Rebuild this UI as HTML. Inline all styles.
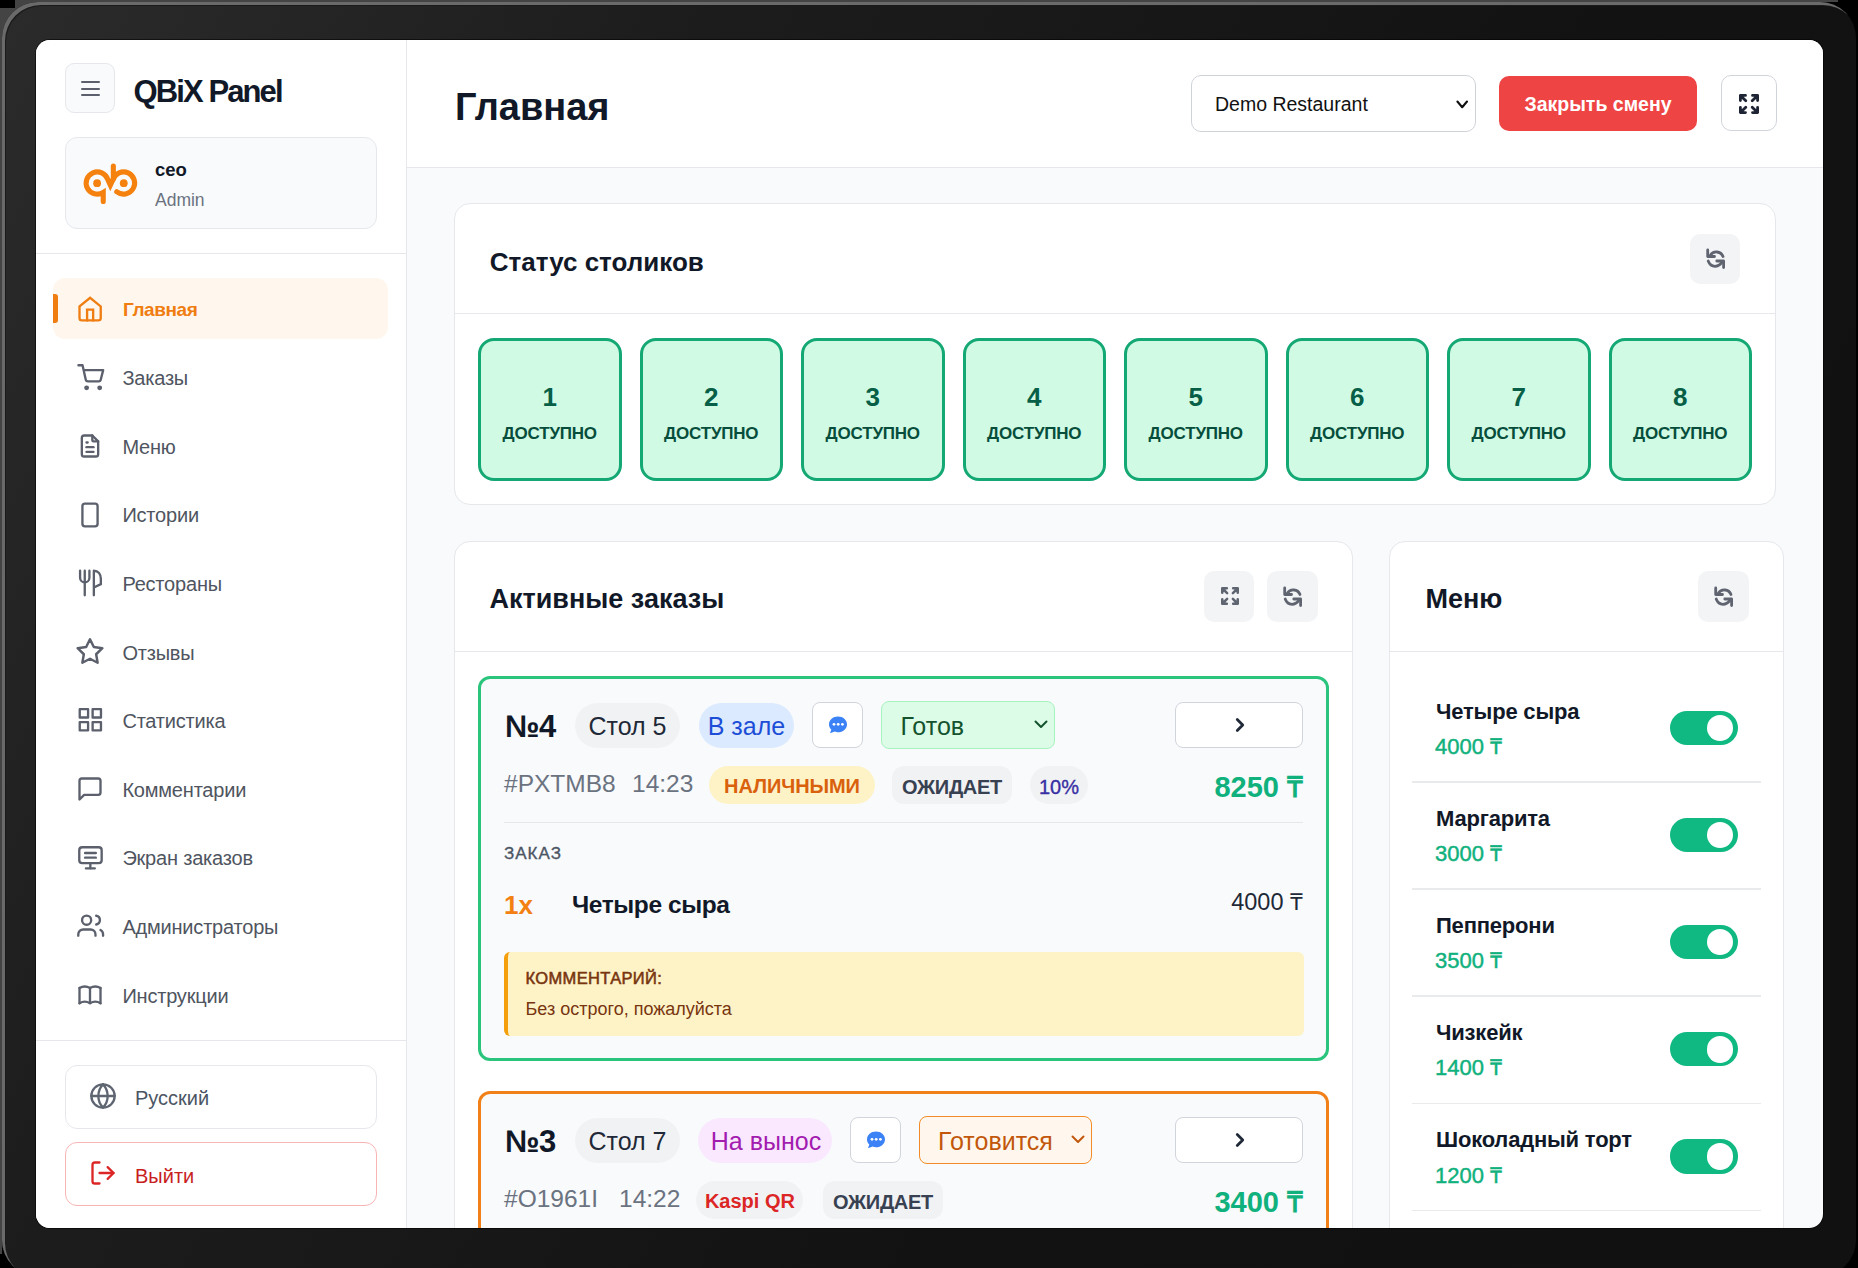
<!DOCTYPE html>
<html><head><meta charset="utf-8">
<style>
html,body{margin:0;padding:0;}
body{width:1858px;height:1268px;position:relative;overflow:hidden;background:#000;font-family:"Liberation Sans",sans-serif;}
.t{position:absolute;white-space:nowrap;}
.b{position:absolute;box-sizing:border-box;}
svg.b{overflow:visible;}
#scr{position:absolute;left:36px;top:40px;width:1787px;height:1188px;border-radius:14px;overflow:hidden;background:#f9fafb;box-shadow:0 0 0 1px rgba(0,0,0,.55);}
</style></head><body>
<div style="position:absolute;left:0;top:0;width:1838px;height:2px;background:#444;"></div>
<div style="position:absolute;left:0;top:0;width:2px;height:1254px;background:#444;"></div>
<div style="position:absolute;left:0;top:0;width:40px;height:40px;background:#444;"></div>
<div style="position:absolute;left:0;top:0;width:15px;height:8px;background:#000;"></div>
<div style="position:absolute;left:2px;top:2px;width:1854px;height:1274px;border-radius:36px;background:linear-gradient(119deg,#2b2b2b 0%,#242424 14%,#1c1c1c 28%,#1a1a1a 37%,#121212 63%,#111 100%);box-shadow:inset 3px 3px 0 #6a6a6a, inset 4px 4px 0 #1a1a1a;"></div>
<div id="scr">
<div class="b" style="left:0.00px;top:0.00px;width:371px;height:1188px;background:#fff;border-right:1px solid #e5e7eb;"></div>
<div class="b" style="left:29.00px;top:23.00px;width:50px;height:50px;background:#f8fafc;border:1px solid #e5e7eb;border-radius:9px;"></div>
<div class="b" style="left:44.50px;top:40.90px;width:19.5px;height:2.3px;background:#5b606c;border-radius:1px;"></div>
<div class="b" style="left:44.50px;top:47.50px;width:19.5px;height:2.3px;background:#5b606c;border-radius:1px;"></div>
<div class="b" style="left:44.50px;top:54.10px;width:19.5px;height:2.3px;background:#5b606c;border-radius:1px;"></div>
<div class="t" style="left:97.50px;top:35.65px;font-size:31px;line-height:31px;font-weight:700;color:#111827;letter-spacing:-1.9px;">QBiX Panel</div>
<div class="b" style="left:29.00px;top:97.00px;width:312px;height:92px;background:#f8fafc;border:1px solid #e5e7eb;border-radius:12px;"></div>
<svg class="b" style="left:42.00px;top:115.00px;width:67px;height:55px" viewBox="0 0 67 55" fill="none" stroke="#f5820f" stroke-width="5.1" stroke-linecap="round" stroke-miterlimit="8"><path d="M25.25 46.5 V37.34 A11.1 11.1 0 1 1 29.8 24.57 L32.35 30.2 L34.99 24.57 A11.1 11.1 0 1 1 38.72 36.75" stroke-linejoin="miter"/><path d="M35.35 11 V24" /><circle cx="19.1" cy="28.2" r="3.9" fill="#f5820f" stroke="none"/><circle cx="45.75" cy="28.2" r="3.9" fill="#f5820f" stroke="none"/></svg>
<div class="t" style="left:119.00px;top:121.28px;font-size:18.5px;line-height:18.5px;font-weight:700;color:#111827;">ceo</div>
<div class="t" style="left:119.00px;top:152.12px;font-size:17.5px;line-height:17.5px;font-weight:400;color:#6b7280;">Admin</div>
<div class="b" style="left:0.00px;top:213.00px;width:370px;height:1px;background:#e5e7eb;"></div>
<div class="b" style="left:17.00px;top:238.00px;width:335px;height:61px;background:#fff7ed;border-radius:12px;"></div>
<div class="b" style="left:17.00px;top:254.00px;width:4.5px;height:29px;background:#f07d12;border-radius:0 3px 3px 0;"></div>
<svg class="b" style="left:40.00px;top:254.70px;width:28px;height:28px;color:#f07d12;" viewBox="0 0 24 24" fill="none" stroke="#f07d12" stroke-width="2" stroke-linecap="round" stroke-linejoin="round"><path d="M3.0 9.8 L12.1 2.4 L21.2 9.8 V19.8 a2 2 0 0 1 -2 2 H5.0 a2 2 0 0 1 -2 -2 Z" stroke-linejoin="miter"/><path d="M9.5 21.8 V12.5 H14.7 V21.8" stroke-linejoin="miter"/></svg>
<div class="t" style="left:87.00px;top:260.35px;font-size:19px;line-height:19px;font-weight:700;color:#f07d12;letter-spacing:-0.4px;">Главная</div>
<svg class="b" style="left:40.00px;top:323.30px;width:28px;height:28px;color:#5b606c;" viewBox="0 0 24 24" fill="none" stroke="#5b606c" stroke-width="2" stroke-linecap="round" stroke-linejoin="round"><circle cx="9.1" cy="21.3" r="1.1" fill="currentColor"/><circle cx="20.3" cy="21.3" r="1.1" fill="currentColor"/><path d="M2.1 1.9 H5.6 L8.3 14 a2 2 0 0 0 2 1.7 H19.3 a2 2 0 0 0 2 -1.7 L23.3 6.1 H6.6"/></svg>
<div class="t" style="left:86.40px;top:328.10px;font-size:20px;line-height:20px;font-weight:400;color:#4f5560;letter-spacing:-0.2px;">Заказы</div>
<svg class="b" style="left:40.00px;top:391.90px;width:28px;height:28px;color:#5b606c;" viewBox="0 0 24 24" fill="none" stroke="#5b606c" stroke-width="2" stroke-linecap="round" stroke-linejoin="round"><path d="M14 3v4a1 1 0 0 0 1 1h4"/><path d="M17 21h-10a2 2 0 0 1 -2 -2v-14a2 2 0 0 1 2 -2h7l5 5v11a2 2 0 0 1 -2 2z"/><path d="M9 9l1 0"/><path d="M9 13l6 0"/><path d="M9 17l6 0"/></svg>
<div class="t" style="left:86.40px;top:396.70px;font-size:20px;line-height:20px;font-weight:400;color:#4f5560;letter-spacing:-0.2px;">Меню</div>
<svg class="b" style="left:40.00px;top:460.50px;width:28px;height:28px;color:#5b606c;" viewBox="0 0 24 24" fill="none" stroke="#5b606c" stroke-width="2" stroke-linecap="round" stroke-linejoin="round"><rect x="5.5" y="2.3" width="13" height="19.4" rx="2.2"/></svg>
<div class="t" style="left:86.40px;top:465.30px;font-size:20px;line-height:20px;font-weight:400;color:#4f5560;letter-spacing:-0.2px;">Истории</div>
<svg class="b" style="left:40.00px;top:529.10px;width:28px;height:28px;color:#5b606c;" viewBox="0 0 24 24" fill="none" stroke="#5b606c" stroke-width="2" stroke-linecap="round" stroke-linejoin="round"><path d="M3.5 1.5 V7.5 a4 4 0 0 0 8 0 V1.5"/><path d="M7.5 1.5 V22.5"/><path d="M15.3 22.5 V1.5 C19 1.5 21.3 4.5 21.3 8.5 V13 L15.3 15.8"/></svg>
<div class="t" style="left:86.40px;top:533.90px;font-size:20px;line-height:20px;font-weight:400;color:#4f5560;letter-spacing:-0.2px;">Рестораны</div>
<svg class="b" style="left:40.00px;top:597.70px;width:28px;height:28px;color:#5b606c;" viewBox="0 0 24 24" fill="none" stroke="#5b606c" stroke-width="2" stroke-linecap="round" stroke-linejoin="round"><path transform="translate(12 12) scale(1.06) translate(-12 -12.3)" d="M12 17.75l-6.172 3.245l1.179 -6.873l-5 -4.867l6.9 -1l3.086 -6.253l3.086 6.253l6.9 1l-5 4.867l1.179 6.873z"/></svg>
<div class="t" style="left:86.40px;top:602.50px;font-size:20px;line-height:20px;font-weight:400;color:#4f5560;letter-spacing:-0.2px;">Отзывы</div>
<svg class="b" style="left:40.00px;top:666.30px;width:28px;height:28px;color:#5b606c;" viewBox="0 0 24 24" fill="none" stroke="#5b606c" stroke-width="2" stroke-linecap="round" stroke-linejoin="round"><path d="M3.2 2.7h7.15v7.15h-7.15z"/><path d="M14.25 2.7h7.15v7.15h-7.15z"/><path d="M3.2 13.75h7.15v7.15h-7.15z"/><path d="M14.25 13.75h7.15v7.15h-7.15z"/></svg>
<div class="t" style="left:86.40px;top:671.10px;font-size:20px;line-height:20px;font-weight:400;color:#4f5560;letter-spacing:-0.2px;">Статистика</div>
<svg class="b" style="left:40.00px;top:734.90px;width:28px;height:28px;color:#5b606c;" viewBox="0 0 24 24" fill="none" stroke="#5b606c" stroke-width="2" stroke-linecap="round" stroke-linejoin="round"><path d="M21 15a2 2 0 0 1-2 2H7l-4 4V5a2 2 0 0 1 2-2h14a2 2 0 0 1 2 2z"/></svg>
<div class="t" style="left:86.40px;top:739.70px;font-size:20px;line-height:20px;font-weight:400;color:#4f5560;letter-spacing:-0.2px;">Комментарии</div>
<svg class="b" style="left:40.00px;top:803.50px;width:28px;height:28px;color:#5b606c;" viewBox="0 0 24 24" fill="none" stroke="#5b606c" stroke-width="2" stroke-linecap="round" stroke-linejoin="round"><rect x="2.8" y="2.8" width="19.2" height="13.6" rx="2.5"/><path d="M12.3 16.4v4.4"/><path d="M8.5 20.9h7.6"/><path d="M7.8 7.7h9.2"/><path d="M7.8 11.7h9.2"/></svg>
<div class="t" style="left:86.40px;top:808.30px;font-size:20px;line-height:20px;font-weight:400;color:#4f5560;letter-spacing:-0.2px;">Экран заказов</div>
<svg class="b" style="left:40.00px;top:872.10px;width:28px;height:28px;color:#5b606c;" viewBox="0 0 24 24" fill="none" stroke="#5b606c" stroke-width="2" stroke-linecap="round" stroke-linejoin="round"><circle cx="9.1" cy="7.0" r="3.9"/><path d="M1.94 20.3 V19.2 a4.2 4.2 0 0 1 4.2 -4.2 H12.5 a4.2 4.2 0 0 1 4.2 4.2 V20.3"/><path d="M17.3 3.2 a3.8 3.8 0 0 1 0 7.5"/><path d="M21 15.4 a4.2 4.2 0 0 1 2.2 3.7 V20.3"/></svg>
<div class="t" style="left:86.40px;top:876.90px;font-size:20px;line-height:20px;font-weight:400;color:#4f5560;letter-spacing:-0.2px;">Администраторы</div>
<svg class="b" style="left:40.00px;top:940.70px;width:28px;height:28px;color:#5b606c;" viewBox="0 0 24 24" fill="none" stroke="#5b606c" stroke-width="2" stroke-linecap="round" stroke-linejoin="round"><path d="M3 19a9 9 0 0 1 9 0a9 9 0 0 1 9 0"/><path d="M3 6a9 9 0 0 1 9 0a9 9 0 0 1 9 0"/><path d="M3 6l0 13"/><path d="M12 6l0 13"/><path d="M21 6l0 13"/></svg>
<div class="t" style="left:86.40px;top:945.50px;font-size:20px;line-height:20px;font-weight:400;color:#4f5560;letter-spacing:-0.2px;">Инструкции</div>
<div class="b" style="left:0.00px;top:1000.00px;width:370px;height:1px;background:#e5e7eb;"></div>
<div class="b" style="left:29.00px;top:1025.00px;width:312px;height:64px;background:#fff;border:1px solid #e5e7eb;border-radius:12px;"></div>
<svg class="b" style="left:53.00px;top:1042.00px;width:28px;height:28px;" viewBox="0 0 24 24" fill="none" stroke="#5f6672" stroke-width="2" stroke-linecap="round" stroke-linejoin="round"><circle cx="12" cy="12" r="10"/><path d="M12 2a14.5 14.5 0 0 0 0 20 14.5 14.5 0 0 0 0-20"/><path d="M2 12h20"/></svg>
<div class="t" style="left:99.00px;top:1048.40px;font-size:20px;line-height:20px;font-weight:400;color:#4b5563;">Русский</div>
<div class="b" style="left:29.00px;top:1102.00px;width:312px;height:64px;background:#fff;border:1px solid #f8b4b4;border-radius:12px;"></div>
<svg class="b" style="left:53.00px;top:1119.00px;width:28px;height:28px;" viewBox="0 0 24 24" fill="none" stroke="#dc2626" stroke-width="2" stroke-linecap="round" stroke-linejoin="round"><path d="M9 21H5a2 2 0 0 1-2-2V5a2 2 0 0 1 2-2h4"/><polyline points="16 17 21 12 16 7"/><line x1="21" y1="12" x2="9" y2="12"/></svg>
<div class="t" style="left:99.00px;top:1125.50px;font-size:20px;line-height:20px;font-weight:400;color:#c81e1e;">Выйти</div>
<div class="b" style="left:371.00px;top:0.00px;width:1416px;height:128px;background:#fff;border-bottom:1px solid #e5e7eb;"></div>
<div class="t" style="left:419.00px;top:47.70px;font-size:38px;line-height:38px;font-weight:700;color:#111827;">Главная</div>
<div class="b" style="left:1155.00px;top:35.00px;width:285px;height:57px;background:#fff;border:1.5px solid #cfd3d8;border-radius:10px;"></div>
<div class="t" style="left:1179.00px;top:54.72px;font-size:19.5px;line-height:19.5px;font-weight:400;color:#111111;">Demo Restaurant</div>
<svg class="b" style="left:1416.00px;top:56.00px;width:16px;height:16px;" viewBox="0 0 16 16" fill="none" stroke="#111" stroke-width="2.1" stroke-linecap="round" stroke-linejoin="round"><path d="M5.4 5.5L10.2 11.2L15 5.5"/></svg>
<div class="b" style="left:1463.00px;top:36.00px;width:198px;height:55px;background:#ef4444;border-radius:10px;"></div>
<div class="t" style="left:1463.00px;width:198px;text-align:center;top:54.72px;font-size:19.5px;line-height:19.5px;font-weight:700;color:#ffffff;">Закрыть смену</div>
<div class="b" style="left:1685.00px;top:35.00px;width:56px;height:56px;background:#fff;border:1.5px solid #d1d5db;border-radius:10px;"></div>
<svg class="b" style="left:1702.80px;top:54.00px;width:20px;height:20px;" viewBox="0 0 20 20" fill="none" stroke="#1e2433" stroke-width="2.8" stroke-linecap="round" stroke-linejoin="round"><path d="M6.5 1.4H1.4V6.5M1.4 1.4L6.8 6.8M13.5 1.4H18.6V6.5M18.6 1.4L13.2 6.8M1.4 13.5V18.6H6.5M1.4 18.6L6.8 13.2M18.6 13.5V18.6H13.5M18.6 18.6L13.2 13.2"/></svg>
<div class="b" style="left:418.00px;top:163.00px;width:1322px;height:302px;background:#fff;border:1px solid #e5e7eb;border-radius:16px;"></div>
<div class="b" style="left:419.00px;top:273.00px;width:1320px;height:1px;background:#e5e7eb;"></div>
<div class="t" style="left:453.80px;top:209.10px;font-size:26px;line-height:26px;font-weight:700;color:#111827;">Статус столиков</div>
<div class="b" style="left:1654.00px;top:194.00px;width:50px;height:50px;background:#f3f4f6;border-radius:10px;"></div>
<svg class="b" style="left:1662.00px;top:200.00px;width:36px;height:36px" viewBox="0 0 36 36" fill="none" stroke="#5f6470" stroke-width="2.8" stroke-linecap="round" stroke-linejoin="round"><path d="M9.7 9.9 V16.5 H16.5"/><path d="M25 16.5 A7.2 7.2 0 0 0 12.3 15.2"/><path d="M10.2 21 C11.5 24.4 14 26.3 17 26.3 C19.6 26.3 22 25 23.9 22.4"/><path d="M18.8 21 H25.6 V27.6"/></svg>
<div class="b" style="left:442.00px;top:298.00px;width:143.5px;height:143px;background:#d1fae5;border:3px solid #14a874;border-radius:16px;"></div>
<div class="t" style="left:442.00px;width:143.5px;text-align:center;top:344.20px;font-size:26px;line-height:26px;font-weight:700;color:#065f46;">1</div>
<div class="t" style="left:442.00px;width:143.5px;text-align:center;top:384.55px;font-size:17px;line-height:17px;font-weight:700;color:#064e3b;letter-spacing:-0.2px;">ДОСТУПНО</div>
<div class="b" style="left:603.50px;top:298.00px;width:143.5px;height:143px;background:#d1fae5;border:3px solid #14a874;border-radius:16px;"></div>
<div class="t" style="left:603.50px;width:143.5px;text-align:center;top:344.20px;font-size:26px;line-height:26px;font-weight:700;color:#065f46;">2</div>
<div class="t" style="left:603.50px;width:143.5px;text-align:center;top:384.55px;font-size:17px;line-height:17px;font-weight:700;color:#064e3b;letter-spacing:-0.2px;">ДОСТУПНО</div>
<div class="b" style="left:765.00px;top:298.00px;width:143.5px;height:143px;background:#d1fae5;border:3px solid #14a874;border-radius:16px;"></div>
<div class="t" style="left:765.00px;width:143.5px;text-align:center;top:344.20px;font-size:26px;line-height:26px;font-weight:700;color:#065f46;">3</div>
<div class="t" style="left:765.00px;width:143.5px;text-align:center;top:384.55px;font-size:17px;line-height:17px;font-weight:700;color:#064e3b;letter-spacing:-0.2px;">ДОСТУПНО</div>
<div class="b" style="left:926.50px;top:298.00px;width:143.5px;height:143px;background:#d1fae5;border:3px solid #14a874;border-radius:16px;"></div>
<div class="t" style="left:926.50px;width:143.5px;text-align:center;top:344.20px;font-size:26px;line-height:26px;font-weight:700;color:#065f46;">4</div>
<div class="t" style="left:926.50px;width:143.5px;text-align:center;top:384.55px;font-size:17px;line-height:17px;font-weight:700;color:#064e3b;letter-spacing:-0.2px;">ДОСТУПНО</div>
<div class="b" style="left:1088.00px;top:298.00px;width:143.5px;height:143px;background:#d1fae5;border:3px solid #14a874;border-radius:16px;"></div>
<div class="t" style="left:1088.00px;width:143.5px;text-align:center;top:344.20px;font-size:26px;line-height:26px;font-weight:700;color:#065f46;">5</div>
<div class="t" style="left:1088.00px;width:143.5px;text-align:center;top:384.55px;font-size:17px;line-height:17px;font-weight:700;color:#064e3b;letter-spacing:-0.2px;">ДОСТУПНО</div>
<div class="b" style="left:1249.50px;top:298.00px;width:143.5px;height:143px;background:#d1fae5;border:3px solid #14a874;border-radius:16px;"></div>
<div class="t" style="left:1249.50px;width:143.5px;text-align:center;top:344.20px;font-size:26px;line-height:26px;font-weight:700;color:#065f46;">6</div>
<div class="t" style="left:1249.50px;width:143.5px;text-align:center;top:384.55px;font-size:17px;line-height:17px;font-weight:700;color:#064e3b;letter-spacing:-0.2px;">ДОСТУПНО</div>
<div class="b" style="left:1411.00px;top:298.00px;width:143.5px;height:143px;background:#d1fae5;border:3px solid #14a874;border-radius:16px;"></div>
<div class="t" style="left:1411.00px;width:143.5px;text-align:center;top:344.20px;font-size:26px;line-height:26px;font-weight:700;color:#065f46;">7</div>
<div class="t" style="left:1411.00px;width:143.5px;text-align:center;top:384.55px;font-size:17px;line-height:17px;font-weight:700;color:#064e3b;letter-spacing:-0.2px;">ДОСТУПНО</div>
<div class="b" style="left:1572.50px;top:298.00px;width:143.5px;height:143px;background:#d1fae5;border:3px solid #14a874;border-radius:16px;"></div>
<div class="t" style="left:1572.50px;width:143.5px;text-align:center;top:344.20px;font-size:26px;line-height:26px;font-weight:700;color:#065f46;">8</div>
<div class="t" style="left:1572.50px;width:143.5px;text-align:center;top:384.55px;font-size:17px;line-height:17px;font-weight:700;color:#064e3b;letter-spacing:-0.2px;">ДОСТУПНО</div>
<div class="b" style="left:418.00px;top:501.00px;width:899px;height:760px;background:#fff;border:1px solid #e5e7eb;border-radius:16px;"></div>
<div class="b" style="left:419.00px;top:611.00px;width:897px;height:1px;background:#e5e7eb;"></div>
<div class="t" style="left:453.50px;top:545.75px;font-size:27px;line-height:27px;font-weight:700;color:#111827;">Активные заказы</div>
<div class="b" style="left:1168.00px;top:531.00px;width:50px;height:51px;background:#f3f4f6;border-radius:10px;"></div>
<svg class="b" style="left:1184.70px;top:547.00px;width:18px;height:18px;" viewBox="0 0 20 20" fill="none" stroke="#5f6672" stroke-width="2.8" stroke-linecap="round" stroke-linejoin="round"><path d="M6.5 1.4H1.4V6.5M1.4 1.4L6.8 6.8M13.5 1.4H18.6V6.5M18.6 1.4L13.2 6.8M1.4 13.5V18.6H6.5M1.4 18.6L6.8 13.2M18.6 13.5V18.6H13.5M18.6 18.6L13.2 13.2"/></svg>
<div class="b" style="left:1231.00px;top:531.00px;width:51px;height:51px;background:#f3f4f6;border-radius:10px;"></div>
<svg class="b" style="left:1239.10px;top:537.65px;width:36px;height:36px" viewBox="0 0 36 36" fill="none" stroke="#5f6470" stroke-width="2.8" stroke-linecap="round" stroke-linejoin="round"><path d="M9.7 9.9 V16.5 H16.5"/><path d="M25 16.5 A7.2 7.2 0 0 0 12.3 15.2"/><path d="M10.2 21 C11.5 24.4 14 26.3 17 26.3 C19.6 26.3 22 25 23.9 22.4"/><path d="M18.8 21 H25.6 V27.6"/></svg>
<div class="b" style="left:442.00px;top:635.60px;width:851px;height:385.5px;background:#f8fafc;border:3px solid #2bc47d;border-radius:12px;"></div>
<div class="t" style="left:469.00px;top:671.15px;font-size:31px;line-height:31px;font-weight:700;color:#111827;letter-spacing:-0.5px;">№4</div>
<div class="b" style="left:539.00px;top:663.00px;width:105px;height:45px;background:#f1f2f4;border-radius:22.5px;"></div>
<div class="t" style="left:539.00px;width:105px;text-align:center;top:673.75px;font-size:25px;line-height:25px;font-weight:400;color:#1f2937;">Стол 5</div>
<div class="b" style="left:663.00px;top:663.00px;width:95px;height:45px;background:#dbeafe;border-radius:22.5px;"></div>
<div class="t" style="left:663.00px;width:95px;text-align:center;top:673.75px;font-size:25px;line-height:25px;font-weight:400;color:#1d4ed8;">В зале</div>
<div class="b" style="left:776.00px;top:662.00px;width:51px;height:45.5px;background:#fff;border:1.5px solid #d1d5db;border-radius:8px;"></div>
<svg class="b" style="left:792.00px;top:675.60px;width:20px;height:18px" viewBox="0 0 20 18"><path d="M10 0.6 C15 0.6 19 4.1 19 8.4 C19 12.7 15 16.2 10 16.2 C8.8 16.2 7.7 16 6.7 15.6 L2 17.3 L3.3 13.4 C1.8 12 1 10.3 1 8.4 C1 4.1 5 0.6 10 0.6Z" fill="#3b82f6"/><circle cx="6" cy="8.3" r="1.4" fill="#fff"/><circle cx="10.2" cy="8.3" r="1.4" fill="#fff"/><circle cx="14.4" cy="8.3" r="1.4" fill="#fff"/></svg>
<div class="b" style="left:845.00px;top:661.00px;width:174px;height:48px;background:#dcfce7;border:1px solid #a7f3c0;border-radius:8px;"></div>
<div class="t" style="left:864.50px;top:673.55px;font-size:25px;line-height:25px;font-weight:400;color:#14532d;">Готов</div>
<svg class="b" style="left:998.00px;top:677.00px;width:14px;height:14px;" viewBox="0 0 14 14" fill="none" stroke="#14532d" stroke-width="2" stroke-linecap="round" stroke-linejoin="round"><path d="M1.5 4.5l5.5 5.5l5.5 -5.5"/></svg>
<div class="b" style="left:1139.00px;top:662.00px;width:128px;height:46px;background:#fff;border:1.5px solid #d1d5db;border-radius:8px;"></div>
<svg class="b" style="left:1193.00px;top:674.00px;width:22px;height:22px;" viewBox="0 0 24 24" fill="none" stroke="#1f2937" stroke-width="3" stroke-linecap="round" stroke-linejoin="round"><path d="M9 6l6 6l-6 6"/></svg>
<div class="t" style="left:468.00px;top:732.17px;font-size:24.5px;line-height:24.5px;font-weight:400;color:#6b7280;">#PXTMB8</div>
<div class="t" style="left:596.00px;top:732.17px;font-size:24.5px;line-height:24.5px;font-weight:400;color:#6b7280;">14:23</div>
<div class="b" style="left:673.00px;top:726.00px;width:166px;height:38px;background:#fef3c7;border-radius:19px;"></div>
<div class="t" style="left:673.00px;width:166px;text-align:center;top:736.00px;font-size:20px;line-height:20px;font-weight:700;color:#d9600c;letter-spacing:-0.1px;">НАЛИЧНЫМИ</div>
<div class="b" style="left:856.00px;top:726.00px;width:120px;height:38px;background:#f1f2f4;border-radius:12px;"></div>
<div class="t" style="left:856.00px;width:120px;text-align:center;top:736.70px;font-size:20px;line-height:20px;font-weight:700;color:#374151;letter-spacing:-0.3px;">ОЖИДАЕТ</div>
<div class="b" style="left:994.00px;top:726.00px;width:58px;height:38px;background:#f1f2f4;border-radius:19px;"></div>
<div class="t" style="left:994.00px;width:58px;text-align:center;top:736.70px;font-size:20px;line-height:20px;font-weight:400;color:#3730a3;-webkit-text-stroke:0.35px #3730a3;">10%</div>
<div class="t" style="left:867.00px;width:400px;text-align:right;top:732.85px;font-size:29px;line-height:29px;font-weight:700;color:#10b17d;">8250 ₸</div>
<div class="b" style="left:468.00px;top:781.50px;width:799px;height:1.5px;background:#e5e7eb;"></div>
<div class="t" style="left:468.00px;top:804.85px;font-size:17px;line-height:17px;font-weight:400;color:#4b5563;letter-spacing:1px;-webkit-text-stroke:0.35px #4b5563;">ЗАКАЗ</div>
<div class="t" style="left:468.00px;top:851.60px;font-size:26px;line-height:26px;font-weight:700;color:#f38012;">1x</div>
<div class="t" style="left:536.00px;top:852.88px;font-size:24.5px;line-height:24.5px;font-weight:700;color:#111827;letter-spacing:-0.4px;">Четыре сыра</div>
<div class="t" style="left:867.00px;width:400px;text-align:right;top:850.73px;font-size:23.5px;line-height:23.5px;font-weight:400;color:#1f2937;">4000 ₸</div>
<div class="b" style="left:468.00px;top:912.00px;width:800px;height:83.5px;background:#fef3c7;border-left:4px solid #f59e0b;border-radius:6px;"></div>
<div class="t" style="left:489.50px;top:929.88px;font-size:16.5px;line-height:16.5px;font-weight:400;color:#78350f;letter-spacing:0.35px;-webkit-text-stroke:0.55px #78350f;">КОММЕНТАРИЙ:</div>
<div class="t" style="left:489.50px;top:960.30px;font-size:18px;line-height:18px;font-weight:400;color:#78350f;">Без острого, пожалуйста</div>
<div class="b" style="left:442.00px;top:1050.70px;width:851px;height:385.5px;background:#f8fafc;border:3px solid #f28019;border-radius:12px;"></div>
<div class="t" style="left:469.00px;top:1086.25px;font-size:31px;line-height:31px;font-weight:700;color:#111827;letter-spacing:-0.5px;">№3</div>
<div class="b" style="left:539.00px;top:1078.10px;width:105px;height:45px;background:#f1f2f4;border-radius:22.5px;"></div>
<div class="t" style="left:539.00px;width:105px;text-align:center;top:1088.85px;font-size:25px;line-height:25px;font-weight:400;color:#1f2937;">Стол 7</div>
<div class="b" style="left:662.00px;top:1078.10px;width:134px;height:45px;background:#fae8ff;border-radius:22.5px;"></div>
<div class="t" style="left:663.00px;width:134px;text-align:center;top:1088.85px;font-size:25px;line-height:25px;font-weight:400;color:#a21caf;">На вынос</div>
<div class="b" style="left:814.00px;top:1077.10px;width:51px;height:45.5px;background:#fff;border:1.5px solid #d1d5db;border-radius:8px;"></div>
<svg class="b" style="left:830.00px;top:1090.70px;width:20px;height:18px" viewBox="0 0 20 18"><path d="M10 0.6 C15 0.6 19 4.1 19 8.4 C19 12.7 15 16.2 10 16.2 C8.8 16.2 7.7 16 6.7 15.6 L2 17.3 L3.3 13.4 C1.8 12 1 10.3 1 8.4 C1 4.1 5 0.6 10 0.6Z" fill="#3b82f6"/><circle cx="6" cy="8.3" r="1.4" fill="#fff"/><circle cx="10.2" cy="8.3" r="1.4" fill="#fff"/><circle cx="14.4" cy="8.3" r="1.4" fill="#fff"/></svg>
<div class="b" style="left:882.60px;top:1076.10px;width:173.3px;height:48px;background:#fff7ed;border:1.5px solid #f28c28;border-radius:8px;"></div>
<div class="t" style="left:902.10px;top:1088.65px;font-size:25px;line-height:25px;font-weight:400;color:#c2570c;">Готовится</div>
<svg class="b" style="left:1034.90px;top:1092.10px;width:14px;height:14px;" viewBox="0 0 14 14" fill="none" stroke="#c2570c" stroke-width="2" stroke-linecap="round" stroke-linejoin="round"><path d="M1.5 4.5l5.5 5.5l5.5 -5.5"/></svg>
<div class="b" style="left:1139.00px;top:1077.10px;width:128px;height:46px;background:#fff;border:1.5px solid #d1d5db;border-radius:8px;"></div>
<svg class="b" style="left:1193.00px;top:1089.10px;width:22px;height:22px;" viewBox="0 0 24 24" fill="none" stroke="#1f2937" stroke-width="3" stroke-linecap="round" stroke-linejoin="round"><path d="M9 6l6 6l-6 6"/></svg>
<div class="t" style="left:468.00px;top:1147.27px;font-size:24.5px;line-height:24.5px;font-weight:400;color:#6b7280;">#O1961I</div>
<div class="t" style="left:583.00px;top:1147.27px;font-size:24.5px;line-height:24.5px;font-weight:400;color:#6b7280;">14:22</div>
<div class="b" style="left:660.40px;top:1141.10px;width:107px;height:38px;background:#f1f2f4;border-radius:19px;"></div>
<div class="t" style="left:660.40px;width:107px;text-align:center;top:1151.10px;font-size:20px;line-height:20px;font-weight:700;color:#dc2626;letter-spacing:0px;">Kaspi QR</div>
<div class="b" style="left:787.00px;top:1141.10px;width:120px;height:38px;background:#f1f2f4;border-radius:12px;"></div>
<div class="t" style="left:787.00px;width:120px;text-align:center;top:1151.80px;font-size:20px;line-height:20px;font-weight:700;color:#374151;letter-spacing:-0.3px;">ОЖИДАЕТ</div>
<div class="t" style="left:867.00px;width:400px;text-align:right;top:1147.95px;font-size:29px;line-height:29px;font-weight:700;color:#10b17d;">3400 ₸</div>
<div class="b" style="left:1353.00px;top:501.00px;width:395px;height:760px;background:#fff;border:1px solid #e5e7eb;border-radius:16px;"></div>
<div class="b" style="left:1354.00px;top:611.00px;width:393px;height:1px;background:#e5e7eb;"></div>
<div class="t" style="left:1389.50px;top:545.75px;font-size:27px;line-height:27px;font-weight:700;color:#111827;">Меню</div>
<div class="b" style="left:1662.00px;top:531.00px;width:51px;height:51px;background:#f3f4f6;border-radius:10px;"></div>
<svg class="b" style="left:1669.70px;top:537.55px;width:36px;height:36px" viewBox="0 0 36 36" fill="none" stroke="#5f6470" stroke-width="2.8" stroke-linecap="round" stroke-linejoin="round"><path d="M9.7 9.9 V16.5 H16.5"/><path d="M25 16.5 A7.2 7.2 0 0 0 12.3 15.2"/><path d="M10.2 21 C11.5 24.4 14 26.3 17 26.3 C19.6 26.3 22 25 23.9 22.4"/><path d="M18.8 21 H25.6 V27.6"/></svg>
<div class="t" style="left:1400.00px;top:660.60px;font-size:22px;line-height:22px;font-weight:700;color:#111827;letter-spacing:-0.2px;">Четыре сыра</div>
<div class="t" style="left:1399.00px;top:695.80px;font-size:22px;line-height:22px;font-weight:400;color:#10b17d;-webkit-text-stroke:0.45px #10b17d;">4000 ₸</div>
<div class="b" style="left:1634.00px;top:670.50px;width:68px;height:34.3px;background:#10b981;border-radius:17px;"></div>
<div class="b" style="left:1670.50px;top:674.50px;width:26.5px;height:26.5px;background:#fff;border-radius:50%;"></div>
<div class="b" style="left:1376.00px;top:741.00px;width:349px;height:1.5px;background:#e9eaec;"></div>
<div class="t" style="left:1400.00px;top:767.80px;font-size:22px;line-height:22px;font-weight:700;color:#111827;letter-spacing:-0.2px;">Маргарита</div>
<div class="t" style="left:1399.00px;top:803.00px;font-size:22px;line-height:22px;font-weight:400;color:#10b17d;-webkit-text-stroke:0.45px #10b17d;">3000 ₸</div>
<div class="b" style="left:1634.00px;top:777.70px;width:68px;height:34.3px;background:#10b981;border-radius:17px;"></div>
<div class="b" style="left:1670.50px;top:781.70px;width:26.5px;height:26.5px;background:#fff;border-radius:50%;"></div>
<div class="b" style="left:1376.00px;top:848.20px;width:349px;height:1.5px;background:#e9eaec;"></div>
<div class="t" style="left:1400.00px;top:875.00px;font-size:22px;line-height:22px;font-weight:700;color:#111827;letter-spacing:-0.2px;">Пепперони</div>
<div class="t" style="left:1399.00px;top:910.20px;font-size:22px;line-height:22px;font-weight:400;color:#10b17d;-webkit-text-stroke:0.45px #10b17d;">3500 ₸</div>
<div class="b" style="left:1634.00px;top:884.90px;width:68px;height:34.3px;background:#10b981;border-radius:17px;"></div>
<div class="b" style="left:1670.50px;top:888.90px;width:26.5px;height:26.5px;background:#fff;border-radius:50%;"></div>
<div class="b" style="left:1376.00px;top:955.40px;width:349px;height:1.5px;background:#e9eaec;"></div>
<div class="t" style="left:1400.00px;top:982.20px;font-size:22px;line-height:22px;font-weight:700;color:#111827;letter-spacing:-0.2px;">Чизкейк</div>
<div class="t" style="left:1399.00px;top:1017.40px;font-size:22px;line-height:22px;font-weight:400;color:#10b17d;-webkit-text-stroke:0.45px #10b17d;">1400 ₸</div>
<div class="b" style="left:1634.00px;top:992.10px;width:68px;height:34.3px;background:#10b981;border-radius:17px;"></div>
<div class="b" style="left:1670.50px;top:996.10px;width:26.5px;height:26.5px;background:#fff;border-radius:50%;"></div>
<div class="b" style="left:1376.00px;top:1062.60px;width:349px;height:1.5px;background:#e9eaec;"></div>
<div class="t" style="left:1400.00px;top:1089.40px;font-size:22px;line-height:22px;font-weight:700;color:#111827;letter-spacing:-0.2px;">Шоколадный торт</div>
<div class="t" style="left:1399.00px;top:1124.60px;font-size:22px;line-height:22px;font-weight:400;color:#10b17d;-webkit-text-stroke:0.45px #10b17d;">1200 ₸</div>
<div class="b" style="left:1634.00px;top:1099.30px;width:68px;height:34.3px;background:#10b981;border-radius:17px;"></div>
<div class="b" style="left:1670.50px;top:1103.30px;width:26.5px;height:26.5px;background:#fff;border-radius:50%;"></div>
<div class="b" style="left:1376.00px;top:1169.80px;width:349px;height:1.5px;background:#e9eaec;"></div>
</div>
</body></html>
